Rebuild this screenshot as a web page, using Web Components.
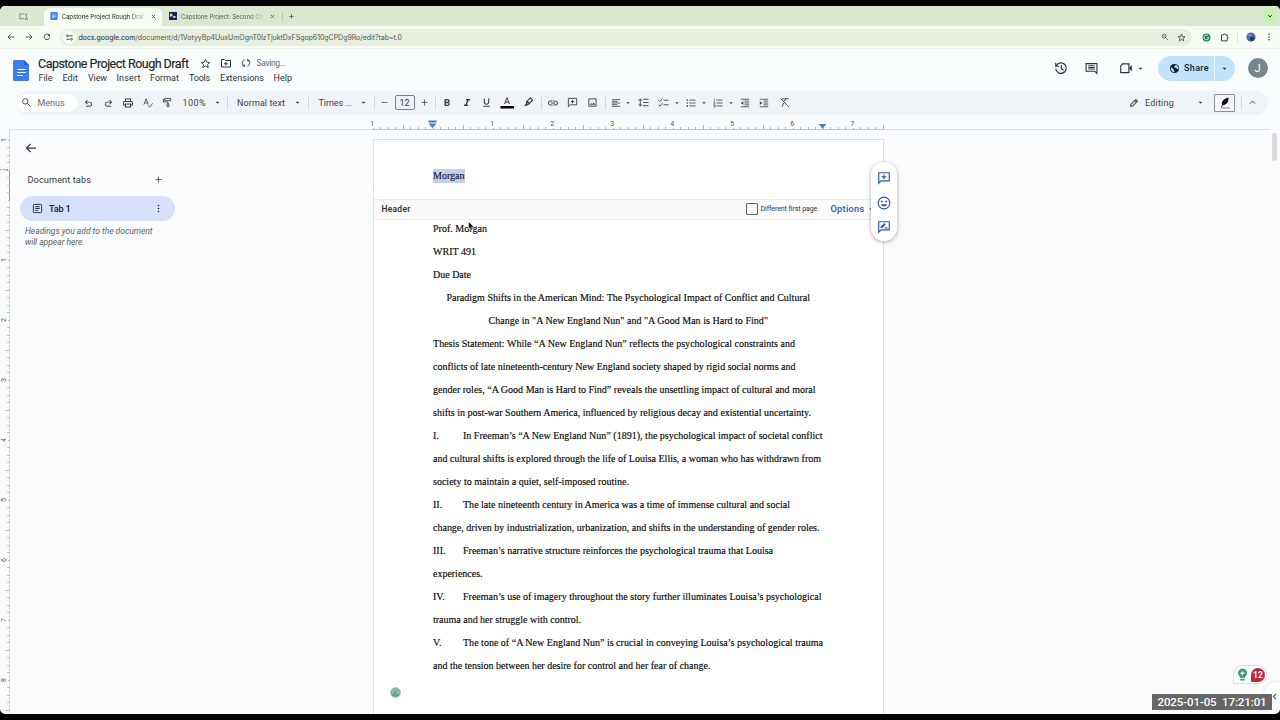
<!DOCTYPE html>
<html lang="en">
<head>
<meta charset="utf-8">
<title>Capstone Project Rough Draft</title>
<style>
html,body{margin:0;padding:0;background:#000;overflow:hidden}
body{width:1280px;height:720px;font-family:Roboto,"Liberation Sans",sans-serif;color:#3a3e42}
</style>
</head>
<body>
<docs-window></docs-window>
<script>
const define=(name,css,html,after)=>customElements.define(name,class extends HTMLElement{
  connectedCallback(){
    if(this.shadowRoot)return;
    const root=this.attachShadow({mode:'open'});
    root.innerHTML=`<style>*{box-sizing:border-box}${css}</style>${typeof html==='function'?html(this):html}`;
    if(after)after(this,root);
  }
});

/* Builds a flex row from [start, width, markup, extra style]; gaps become left margins. */
const row=(items,origin=0)=>{
  let edge=origin;
  return '<div class="row">'+items.map(([x,w,h,s=''])=>{
    const gap=x-edge; edge=x+w;
    return `<span style="margin-left:${gap}px;width:${w}px;${s}">${h}</span>`;
  }).join('')+'</div>';
};
const ROW='.row{display:flex;align-items:center;height:100%}.row>span{flex:none;display:flex;align-items:center;white-space:nowrap}';
const ic=(n,s=12)=>`<ui-icon name="${n}" size="${s}"></ui-icon>`;
const mid=(c,n,s=12,st)=>[c-s/2,s,ic(n,s),st];
const txt=(x,w,t,st)=>[x,w,`<fit-text w="${w}">${t}</fit-text>`,st];
const bar=(x,h=14)=>[x,1,'',`height:${h}px;background:#d5dade`];

const S='fill="none" stroke="currentColor" stroke-width="2"';
const ICONS={
  undo:['0 -960 960 960','<path d="M280-200v-80h284q63 0 109.500-40T720-420q0-60-46.500-100T564-560H312l104 104-56 56-200-200 200-200 56 56-104 104h252q97 0 169.500 63T800-420q0 94-72.500 157T564-200H280Z"/>'],
  redo:['0 -960 960 960','<path transform="translate(960 0) scale(-1 1)" d="M280-200v-80h284q63 0 109.500-40T720-420q0-60-46.500-100T564-560H312l104 104-56 56-200-200 200-200 56 56-104 104h252q97 0 169.500 63T800-420q0 94-72.500 157T564-200H280Z"/>'],
  print:['','<path d="M19 8h-1V3H6v5H5c-1.660 0-3 1.340-3 3v6h4v4h12v-4h4v-6c0-1.660-1.340-3-3-3zM8 5h8v3H8V5zm8 12v2H8v-4h8v2zm2-2v-2H6v2H4v-4c0-.550.450-1 1-1h14c.550 0 1 .450 1 1v4h-2z"/>'],
  spell:['',`<path ${S} d="M2 16 7.500 2 13 16M4 12h7M12 18l4 4 7-9"/>`],
  paint:['',`<path ${S} d="M6 3h13v5H6zM6 5H3v6h10v4M11 15h4v6h-4z"/>`],
  search:['',`<g ${S}><circle cx="9.500" cy="9.500" r="6"/><path d="m14 14 7 7"/></g>`],
  zoomout:['',`<g ${S}><circle cx="9.500" cy="9.500" r="6"/><path d="m14 14 7 7M7 9.500h5"/></g>`],
  down:['','<path d="M5 9h14l-7 7z"/>'],
  minus:['',`<path ${S} d="M4 12h16"/>`],
  plus:['',`<path ${S} d="M12 4v16M4 12h16"/>`],
  bold:['','<path d="M15.600 10.790c.970-.670 1.650-1.770 1.650-2.790 0-2.260-1.750-4-4-4H7v14h7.040c2.090 0 3.710-1.700 3.710-3.790 0-1.520-.860-2.820-2.150-3.420zM10 6.500h3c.830 0 1.500.670 1.500 1.500s-.670 1.500-1.500 1.500h-3v-3zm3.500 9H10v-3h3.500c.830 0 1.500.670 1.500 1.500s-.670 1.500-1.500 1.500z"/>'],
  italic:['','<path d="M10 4v3h2.210l-3.420 8H6v3h8v-3h-2.210l3.420-8H18V4z"/>'],
  under:['','<path d="M12 17c3.310 0 6-2.690 6-6V3h-2.500v8c0 1.930-1.570 3.500-3.500 3.500S8.500 12.930 8.500 11V3H6v8c0 3.310 2.690 6 6 6zm-7 2v2h14v-2H5z"/>'],
  color:['','<path d="M11 1 6 14h2.200l1.100-3h5.400l1.100 3H18L13 1h-2zm-1 8 2-5.400L14 9h-4z"/><path fill="#000" d="M-1 18h27v5H-1z"/>'],
  marker:['','<path fill="none" stroke="currentColor" stroke-width="2.600" d="m8 10 8-8 5 5-8 8-4 1-3 1 2-3zM9 9l6 6"/><path d="m3 19 5-5 3 3-2 2z"/>'],
  link:['','<path d="M3.900 12c0-1.710 1.390-3.100 3.100-3.100h4V7H7c-2.760 0-5 2.240-5 5s2.240 5 5 5h4v-1.900H7c-1.710 0-3.100-1.390-3.100-3.100zM8 13h8v-2H8v2zm9-6h-4v1.900h4c1.710 0 3.100 1.390 3.100 3.100s-1.390 3.100-3.100 3.100h-4V17h4c2.760 0 5-2.240 5-5s-2.240-5-5-5z"/>'],
  addc:['',`<path ${S} d="M3 21V3h18v14H7zM12 6v8M8 10h8"/>`],
  image:['',`<path ${S} d="M4 4h16v16H4z"/><path d="m6 17 3-4 2.500 3 3-4 4 5z"/>`],
  align:['',`<path ${S} d="M2 4h20M2 8h13M2 12h20M2 16h13M2 20h20"/>`],
  spacing:['',`<path ${S} d="M11 5h12M11 12h12M11 19h12M5 4v16M1.500 8 5 4l3.500 4M1.500 16 5 20l3.500-4"/>`],
  check:['',`<path ${S} d="M12 7h11M12 17h11M1 7l3 3 6-7M1 17l3 3 6-7"/>`],
  bullets:['',`<path ${S} d="M8 5h15M8 12h15M8 19h15"/><circle cx="3" cy="5" r="2"/><circle cx="3" cy="12" r="2"/><circle cx="3" cy="19" r="2"/>`],
  numbers:['',`<path ${S} d="M8 5h15M8 12h15M8 19h15"/><path fill="none" stroke="currentColor" stroke-width="1.400" d="M2 2.500h1.500V8M1 10h4L1.500 14H5M1 16.500h4v5H1M2 19h3"/>`],
  outdent:['',`<path ${S} d="M2 3h20M11 7.500h11M11 12h11M11 16.500h11M2 21h20"/><path d="M8 7.500v9L2 12z"/>`],
  indent:['',`<path ${S} d="M2 3h20M11 7.500h11M11 12h11M11 16.500h11M2 21h20"/><path d="M2 7.500v9L8 12z"/>`],
  clear:['',`<path ${S} d="M6 4h15M14 4l-2 5M10 13l-3 8M3 3l18 18"/>`],
  pencil:['','<path fill="none" stroke="currentColor" stroke-width="2.500" d="M4 20v-4L16.500 3.500l4 4L8 20zM13.500 6.500l4 4"/>'],
  up:['','<path fill="none" stroke="currentColor" stroke-width="2.500" d="m5 15 7-7 7 7"/>'],
  chev:['','<path fill="none" stroke="currentColor" stroke-width="4" d="m5 9 7 7 7-7"/>'],
  left:['','<path fill="none" stroke="currentColor" stroke-width="2.800" d="m16 5-7 7 7 7"/>'],
  quill:['','<path fill="#111" d="M19 1C10 3 4 9 6 16l-2 5 1.500.500 2-5C15 16 20 9 19 1z"/><path fill="none" stroke="#555" stroke-width="1.500" d="M7 22h15"/>'],
  back:['','<path fill="none" stroke="currentColor" stroke-width="2.500" d="M22 12H3.500M11 4l-8 8 8 8"/>'],
  fwd:['','<path fill="none" stroke="currentColor" stroke-width="2.500" d="M2 12h18.500M13 4l8 8-8 8"/>'],
  reload:['','<path fill="none" stroke="currentColor" stroke-width="2.600" d="M19 6.500A8.500 8.500 0 1 0 20.500 13"/><path d="M21 2v8h-8z"/>'],
  tune:['','<g fill="none" stroke="currentColor" stroke-width="3"><path d="M11 6h12M1 18h12"/><circle cx="5" cy="6" r="3"/><circle cx="19" cy="18" r="3"/></g>'],
  star:['',`<path ${S} d="m12 3 2.700 6.200 6.700.600-5 4.500 1.500 6.600L12 17.400l-5.900 3.500 1.500-6.600-5-4.500 6.700-.600z"/>`],
  folder:['',`<path ${S} d="M3 5h6l2 2h10v13H3zM12 10v7M8 13.500h7"/>`],
  sync:['',`<path ${S} d="M9 4a8.500 8.500 0 0 0-3 14.500M15 20a8.500 8.500 0 0 0 3-14.500"/><path d="M2 16h7v7zM22 8h-7V1z"/>`],
  history:['',`<path ${S} d="M4 8a9 9 0 1 1-1 5M3 3v6h6M12.500 7v6l4 3"/>`],
  comment:['',`<path ${S} d="M2 3h20v18l-4-4H2zM6 7h12M6 10h12M6 13h12"/>`],
  video:['',`<path ${S} d="M6 5h11v15H3V8z"/><path d="m17 12 5-5v11z"/>`],
  globe:['','<circle cx="12" cy="12" r="10"/><path fill="#c3e3fa" d="M5 9.500 10 14v2l2 2v2.300C7 20 3.500 16 4 11zM14 4c1 2-1 3-3 3.500V10h5l1 3h2l1.500 1.500C21 10 19 5.500 14 4z"/>'],
  puzzle:['','<path fill="none" stroke="currentColor" stroke-width="2.600" d="M4 5h5.500a2.500 2.500 0 0 1 5 0H19v5a2.500 2.500 0 0 1 0 5v6H4z"/>'],
  dots:['','<circle cx="12" cy="4" r="2.200"/><circle cx="12" cy="12" r="2.200"/><circle cx="12" cy="20" r="2.200"/>'],
  gram:['','<circle cx="12" cy="12" r="10.500" fill="#19805e"/><path fill="none" stroke="#fff" stroke-width="2.400" d="M17 8a6.500 6.500 0 1 0 1 5h-5"/>'],
  avatar:['','<circle cx="12" cy="12" r="11" fill="#4f68a4"/><path fill="#253557" d="M12 12h9l-2 6-6 5-3-5z"/><path fill="#8b9ec9" d="M5 6h9v3H6z"/>'],
  gdoc:['','<rect x="1" y="0" width="22" height="24" rx="3" fill="#4285f4"/><path stroke="#dceaff" stroke-width="2" d="M6 9h12M6 13h12M6 17h8"/>'],
  fav:['','<rect width="24" height="24" fill="#1b2150"/><path stroke="#fff" stroke-width="2.500" fill="none" d="M4 14V6h5v5H4M11 11l4 7 2-6 4 5"/>'],
  panel:['',`<path ${S} d="M14 5H2v13h11M16 6h4v10"/><path d="M15 17h9v3h-9z"/>`],
  x:['','<path fill="none" stroke="currentColor" stroke-width="3.500" d="m4 4 16 16M20 4 4 20"/>'],
  tab:['',`<rect x="3" y="3" width="18" height="18" rx="2" ${S}/><path ${S} d="M7 8h10M7 12h10M7 16h6"/>`],
  smile:['',`<circle cx="12" cy="12" r="10" ${S}/><circle cx="8.300" cy="9.500" r="1.700"/><circle cx="15.700" cy="9.500" r="1.700"/><path d="M6.500 14h11a5.800 5.800 0 0 1-11 0z"/>`],
  suggest:['',`<path ${S} d="M3 21V3h18v14H7zM13 13.500h5"/><path d="m6 14 .500-3 6-6 2.500 2.500-6 6z"/>`],
  bulb:['','<path fill="#3a9c7b" d="M12 1a8.500 8.500 0 0 0-4.500 15.500V18h9v-1.500A8.500 8.500 0 0 0 12 1zM8 20h8v3H8z"/><path fill="#fff" d="m12 4.500 1.500 3.500 3.500 1.500-3.500 1.500-1.500 3.500-1.500-3.500L7 9.500 10.500 8z"/>'],
  sphere:['','<circle cx="12" cy="12" r="11.500" fill="#8db9ac"/><path fill="none" stroke="#37776a" stroke-width="2" d="M5 19c4-5 8 2 6-5M13 21c1-5 3 0 6-5M10 12l3 1"/>']
};
define('ui-icon',':host{display:block;flex:none;line-height:0}svg{display:block;fill:currentColor;overflow:visible}',e=>{
  const [vb,body]=ICONS[e.getAttribute('name')],s=e.getAttribute('size');
  return `<svg width="${s}" height="${s}" viewBox="${vb||'0 0 24 24'}">${body}</svg>`;
});

define('tab-strip',`:host{display:block;height:20px;background:#dae8cf;border-radius:5px 0 0 0}${ROW}
 .row>span{font:6.100px Inter,sans-serif;color:#30362f}
 .tab{display:flex;align-items:center;width:118px;height:18px;background:#f8fdf3;border-radius:6px 6px 0 0;margin-top:2px;padding-bottom:2px}
 .fade{-webkit-mask:linear-gradient(90deg,#000 82%,#0003);mask:linear-gradient(90deg,#000 82%,#0003)}
 .menu{width:13px;height:14px;border-radius:4px;background:#c5f5ad;display:grid;place-items:center;color:#1c3a12}`,
 row([
  [19,9,ic('panel',9),'color:#6b7567'],
  [44,118,`<div class="tab">${row([[6,8,ic('gdoc',8)],txt(17.5,82.5,'<span class="fade">Capstone Project Rough Draf</span>','color:#20251f'),mid(109.5,'x',5)])}</div>`],
  mid(173,'fav',8), txt(181,82,'<span class="fade">Capstone Project: Second Ch</span>','color:#5b6458'), mid(272.5,'x',5,'color:#4f574c'),
  [282,1,'','height:9px;background:#b9c8ae'], mid(291,'plus',7),
  [1263,13,`<div class="menu">${ic('chev',6)}</div>`]
 ]));

define('address-bar',`:host{display:block;height:23px;background:#f8fdf3;border-bottom:1px solid #edf2e9}${ROW}
 .row>span{color:#353b34}
 .pill{height:17px;width:1132px;border-radius:9px;background:#e7eee0;font:7px Inter,sans-serif}
 .site{width:14px;height:14px;border-radius:7px;background:#f8fdf3;display:grid;place-items:center}
 b{font-weight:400;color:#1f241e}`,
 row([
  mid(11,'back',8),mid(29,'fwd',8),mid(47,'reload',8),
  [60,1132,`<div class="pill">${row([
    [2,14,`<div class="site">${ic('tune',7)}</div>`],
    txt(18.5,323.5,'<b>docs.google.com</b>/document/d/1VotyyBp4UuxUmOgnT0lzTjuktDxFSgop610gCPDg9Ro/edit?tab=t.0','color:#50584d'),
    mid(1104.5,'zoomout',8),mid(1121,'star',9)])}</div>`],
  mid(1206,'gram',9),mid(1224,'puzzle',9),[1237,1,'','height:9px;background:#cfe5c3'],mid(1251,'avatar',10),mid(1269,'dots',8)
 ]));

define('doc-header',`:host{display:block;height:42px;color:#303438}${ROW}
 .grid{display:grid;grid-template-columns:38px 400px 1fr;height:42px}
 .logo{padding:11px 0 0 13px}
 .mid{display:grid;grid-template-rows:16px 14px;padding-top:6px}
 .right{height:38px}
 .share{width:77px;height:25px;border-radius:13px;background:#c3e3fa;color:#08233d;overflow:hidden}
 .me{width:20px;height:20px;border-radius:50%;background:#78868c;color:#fff;font-size:11px;display:grid;place-items:center}
 .menus{font-size:9px}`,
 `<div class="grid"><div class="logo"><svg width="16" height="21" viewBox="0 0 16 21"><path fill="#3b7de9" d="M1.500 0H11l5 5v14.500a1.500 1.500 0 0 1-1.500 1.500h-13A1.500 1.500 0 0 1 0 19.500v-18A1.500 1.500 0 0 1 1.500 0z"/><path fill="#2b62c7" d="M11 0l5 5h-5z"/><path stroke="#fff" d="M4 9.500h9M4 12.500h9M4 15.500h6"/></svg></div>
 <div class="mid"><div class="title">${row([
   txt(0,150.5,'Capstone Project Rough Draft','font-size:12.500px;color:#202427;-webkit-text-stroke:.15px #202427'),mid(167.5,'star',11),mid(188,'folder',12),mid(208,'sync',10),txt(218.5,29,'Saving...','font-size:8.500px;color:#666d72')])}</div>
 <div class="menus">${row([txt(.5,14,'File'),txt(24.5,15.5,'Edit'),txt(50,19,'View'),txt(78.5,24,'Insert'),txt(112,29,'Format'),txt(151,21,'Tools'),txt(182,44,'Extensions'),txt(235.5,18.5,'Help')])}</div></div>
 <div class="right">${row([mid(1061,'history',14),mid(1091.5,'comment',13),mid(1125.5,'video',14),mid(1140.5,'down',7),
   [1157.5,77,`<div class="share">${row([mid(17,'globe',11),txt(26.5,25,'Share','font-size:9px;font-weight:500;height:25px'),[56,1,'','height:25px;background:#e6f4ff'],mid(67,'down',7)])}</div>`],
   [1247.5,20,'<div class="me">J</div>']],438)}</div></div>`);

define('format-bar',`:host{display:block;height:24px;padding:0 12px 0 16px}
 .bg{height:24px;background:#f0f3f8;border-radius:12px;padding-bottom:1px}${ROW}
 .row>span{font-size:9px;color:#3e4247}
 .menus{width:62px;height:18px;border-radius:9px;background:#fdfefe}
 .size{width:20px;height:15px;border:1px solid #7b8085;border-radius:2px;font-size:9px;display:grid;place-items:center;color:#33373a}
 .quill{width:21px;height:18px;border:1px solid #8b8f93;border-radius:1px;background:#f5f7f9;display:grid;place-items:center}`,
 `<div class="bg">${row([
  [16,62,`<div class="menus">${row([mid(10.5,'search',11),txt(21.5,27,'Menus','color:#666b70')])}</div>`],
  mid(88.500,'undo',11,'padding-top:1px'),mid(108.500,'redo',11,'padding-top:1px'),mid(128,'print',12),mid(147.500,'spell',10),mid(167.500,'paint',11),
  txt(182.500,23.500,'100%'),mid(217,'down',7),bar(227),
  txt(237,48,'Normal text'),mid(297,'down',7),bar(308),
  txt(318.500,33.500,'Times ...'),mid(363,'down',7),bar(374),
  mid(384.500,'minus',9),[394.500,20,'<div class="size">12</div>'],mid(424.500,'plus',9),bar(435),
  mid(447,'bold',12),mid(467,'italic',12),mid(486.500,'under',11),mid(507,'color',12),mid(528,'marker',11),bar(541),
  mid(552.500,'link',12),mid(572.500,'addc',11),mid(592.500,'image',11),bar(605),
  mid(616,'align',10),mid(627.500,'down',6),mid(643,'spacing',11),mid(663.500,'check',11),mid(676.500,'down',6),
  mid(690.500,'bullets',10),mid(703.500,'down',6),mid(717.500,'numbers',10),mid(730.500,'down',6),
  mid(744.500,'outdent',10),mid(764,'indent',10),mid(784.500,'clear',11),
  mid(1133.500,'pencil',10),txt(1145,29,'Editing'),mid(1200.500,'down',7),
  [1214,21,`<div class="quill">${ic('quill',12)}</div>`],bar(1241),mid(1252.500,'up',9)
 ],16)}</div>`);

define('inch-ruler',':host{display:block;height:15px}svg{display:block}text{font:7px Roboto,sans-serif;fill:#50565b;text-anchor:middle}',()=>{
  let s='';
  for(let i=0;i<=68;i++){const x=373+i*7.5,r=i%8;
    if(r===0&&i!==8)s+=`<text x="${x-.7}" y="10.500">${Math.abs(i/8-1)}</text>`;
    s+=`<path d="M${Math.floor(x)+.5} ${i===68||r===4?10:r===0?13:12}V15" stroke="#b3b8bd"/>`;}
  return `<svg width="1280" height="15"><path d="M10 14.500H1270" stroke="#dfdfe3"/><path d="M373 14.500H884" stroke="#c3c6c9"/>${s}
  <path fill="#4678c8" d="M428.500 5.500h8v2h-8zM428.500 8.500h8l-4 4.500zM818.500 9h8l-4 4.500z"/></svg>`;
});

define('side-ruler',':host{display:block;width:10px;height:583px;flex:none;overflow:hidden}svg{display:block}text{font:7px Roboto,sans-serif;fill:#50565b;text-anchor:middle}',()=>{
  let s='';
  for(let i=0;i<77;i++){const y=10+i*7.5,r=i%8,n=i/8-1;
    if(r===0&&n!==0)s+=`<text transform="translate(5.500 ${y}) rotate(-90)">${Math.abs(n)}</text>`;
    s+=`<path d="M${r===4?5:r===0?8:7} ${Math.floor(y)+.5}H10" stroke="#c0c4c8"/>`;}
  return `<svg width="10" height="583"><path d="M9.500 0V583" stroke="#d5d8da"/><path d="M9.500 40V70" stroke="#9a9ea2"/><path d="M0 39.500H9" stroke="#9a9ea2" stroke-dasharray="2 1"/>${s}</svg>`;
});

define('tabs-panel',`:host{display:block;width:363px;flex:none;color:#33383c;padding:9px 0 0;box-sizing:border-box}${ROW}
 .back{height:18px;padding-left:15px;display:flex;align-items:center}
 .head{height:16px;margin-top:14px}
 .tab{width:155px;height:25px;border-radius:13px;background:#d6e1f9;margin:9px 0 0 10px;color:#0e2345}
 .hint{margin:5px 0 0 15px;font:italic 8.500px/11px Roboto,sans-serif;color:#5c6165;display:flex;flex-direction:column;align-items:flex-start}
 .row>span{font-size:9.200px}`,
 `<div class="back">${ic('back',12)}</div>
 <div class="head">${row([txt(17.500,63.500,'Document tabs'),mid(148,'plus',9)])}</div>
 <div class="tab">${row([mid(17.500,'tab',11),txt(29,21.5,'Tab 1','font-weight:500'),mid(138,'dots',9)])}</div>
 <div class="hint"><fit-text w="127.500">Headings you add to the document</fit-text><fit-text w="59.500">will appear here.</fit-text></div>`);

const LINES=[
 [0,54,'Prof. Morgan'],[0,43,'WRIT 491'],[0,38,'Due Date'],
 [13.5,363.5,'Paradigm Shifts in the American Mind: The Psychological Impact of Conflict and Cultural'],
 [55.5,279.5,'Change in "A New England Nun" and "A Good Man is Hard to Find"'],
 [0,362,'Thesis Statement: While “A New England Nun” reflects the psychological constraints and'],
 [0,362.5,'conflicts of late nineteenth-century New England society shaped by rigid social norms and'],
 [0,382.5,'gender roles, “A Good Man is Hard to Find” reveals the unsettling impact of cultural and moral'],
 [0,378,'shifts in post-war Southern America, influenced by religious decay and existential uncertainty.'],
 [30,359.5,'In Freeman’s “A New England Nun” (1891), the psychological impact of societal conflict','I.'],
 [0,388,'and cultural shifts is explored through the life of Louisa Ellis, a woman who has withdrawn from'],
 [0,196,'society to maintain a quiet, self-imposed routine.'],
 [30,327,'The late nineteenth century in America was a time of immense cultural and social','II.'],
 [0,386.5,'change, driven by industrialization, urbanization, and shifts in the understanding of gender roles.'],
 [30,310,'Freeman’s narrative structure reinforces the psychological trauma that Louisa','III.'],
 [0,49.5,'experiences.'],
 [30,358.5,'Freeman’s use of imagery throughout the story further illuminates Louisa’s psychological','IV.'],
 [0,148,'trauma and her struggle with control.'],
 [30,360,'The tone of “A New England Nun” is crucial in conveying Louisa’s psychological trauma','V.'],
 [0,277.5,'and the tension between her desire for control and her fear of change.']
];
define('doc-page',`:host{display:block;width:511px;height:580px;flex:none;margin-top:9px;background:#fff;border:1px solid #dfe1e3;border-bottom:0;color:#080808;font:10px "Liberation Serif",serif;box-sizing:border-box}${ROW}
 .hd{height:59px;padding:29px 0 0 59px}
 .sel{display:inline-block;background:#c5cfe9;height:14px;line-height:13px;vertical-align:top;color:#15203c;-webkit-text-stroke:.15px #15203c}
 .bar{height:21px;padding-bottom:1px;background:#fafafb;border:solid #eceded;border-width:1px 0;font-family:Roboto,sans-serif;color:#33373a}
 .box{width:12px;height:12px;border:1.500px solid #5c6063;border-radius:1px;box-sizing:border-box}
 .body{margin-top:-3px;padding-left:59px}
 .line{display:flex;height:23px;line-height:23px;white-space:nowrap}
 i{font-style:normal;width:30px;margin-right:-30px}
 .text{-webkit-text-stroke:.15px #080808}`,
 `<div class="hd"><span class="sel"><fit-text w="31.500">Morgan</fit-text></span></div>
 <div class="bar">${row([txt(7.500,29,'Header','font-size:8.500px;font-weight:600'),[371.500,12,'<div class="box"></div>'],txt(386.500,56.500,'Different first page','font-size:7px'),txt(456.500,34,'Options','font-size:9.200px;color:#2a5cae;font-weight:500;padding-bottom:1px'),mid(497,'down',6,'color:#2a5cae')])}</div>
 <div class="body text">${LINES.map(([x,w,t,n])=>`<div class="line">${n?`<i>${n}</i>`:''}<fit-text w="${w}" style="margin-left:${x}px">${t}</fit-text></div>`).join('')}</div>`);

define('float-tools',':host{position:absolute;left:871px;top:162px;width:26px;height:79px;border-radius:13px;background:#fff;box-shadow:0 1px 4px #0005;color:#2f589f;display:flex;flex-direction:column;align-items:center;justify-content:space-between;padding:9px 0 7px;box-sizing:border-box}',
 ic('addc',14)+ic('smile',14)+ic('suggest',14));

define('writing-badge',`:host{position:absolute;left:1233px;top:665px;width:34px;height:19px;border:1px solid #d4e2df;border-radius:10px 10px 10px 1px;background:#fff;display:flex;align-items:center;gap:2px;padding-left:2px;box-sizing:border-box}
 b{width:14px;height:14px;border-radius:7px 7px 7px 1px;background:#b82a3c;color:#fff;font:700 8.500px/14px Roboto,sans-serif;text-align:center}`,
 ic('bulb',13)+'<b>12</b>');

define('time-stamp',':host{position:absolute;left:1152px;top:694px;width:120px;height:16px;background:#666;color:#fff;font:500 11.500px/16px Roboto,sans-serif;padding-left:5.500px;box-sizing:border-box;white-space:pre}',
 '<fit-text w="109">2025-01-05  17:21:01</fit-text>');

define('docs-window',`:host{display:block;position:relative;width:1280px;height:708px;margin-top:6px}
 .win{height:708px;overflow:hidden;border-radius:5px;background:linear-gradient(180deg,#f9fdfc 0,#f9fcfe 130px,#fafbfc 240px,#fbfbfb 340px)}
 .main{display:flex;height:584px}
 .over{position:absolute;left:0;top:-6px}
 .scroll{position:absolute;left:1272px;top:133px;width:5px;height:28px;border-radius:3px;background:#d8dadc}
 .side{position:absolute;left:1264px;top:682px;width:16px;height:28px;border-radius:12px 0 0 12px;background:#fff;box-shadow:0 0 3px #0002;display:flex;align-items:center;justify-content:flex-end;box-sizing:border-box;padding-right:1px}
 .ball{position:absolute;left:390px;top:686.500px}
 .cur{position:absolute;left:468px;top:221px}`,
 `<div class="win"><tab-strip></tab-strip><address-bar></address-bar><doc-header></doc-header><format-bar></format-bar><inch-ruler></inch-ruler>
 <div class="main"><side-ruler></side-ruler><tabs-panel></tabs-panel><doc-page></doc-page></div></div>
 <div class="over"><div class="scroll"></div><float-tools></float-tools><writing-badge></writing-badge><div class="side">${ic('left',9)}</div><time-stamp></time-stamp>
 <div class="ball">${ic('sphere',11)}</div>
 <svg class="cur" width="7" height="10" viewBox="0 0 7 10"><path fill="#111" stroke="#fff" stroke-width=".5" d="M.5.500v7.500l1.700-1.500 1.300 2.700 1.200-.600-1.200-2.500H6z"/></svg></div>`);

/* Tracks a label out to the width given in its w attribute. */
define('fit-text',':host{display:inline-block;white-space:pre;flex:none}','<slot></slot>',e=>{
  const n=e.textContent.length,w=e.getBoundingClientRect().width;
  e.style.letterSpacing=(parseFloat(e.getAttribute('w'))-w)/n+'px';
});
</script>
</body>
</html>
